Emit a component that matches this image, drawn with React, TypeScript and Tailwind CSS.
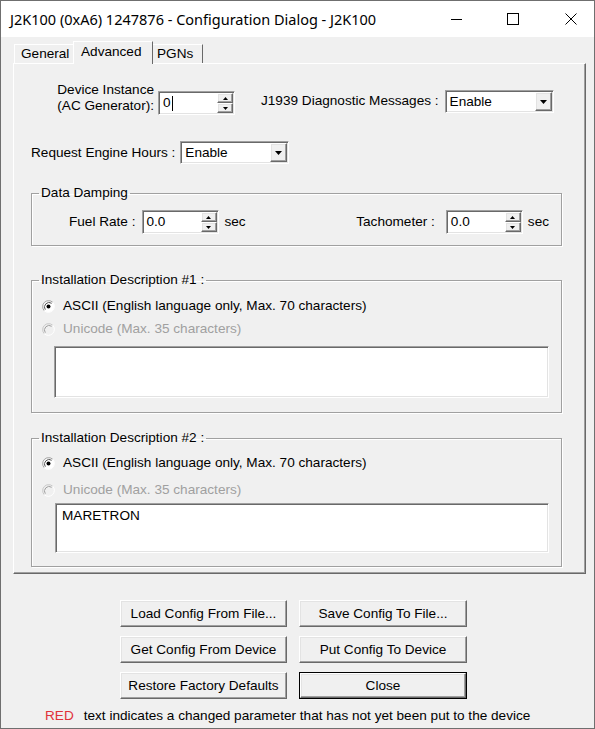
import React from "react";

const sunken =
  "border border-t-[#a0a0a0] border-l-[#a0a0a0] border-r-white border-b-white shadow-[inset_1px_1px_0_#696969,inset_-1px_-1px_0_#e3e3e3]";
const raised =
  "border border-t-white border-l-white border-r-[#696969] border-b-[#696969] shadow-[inset_-1px_-1px_0_#a0a0a0,inset_1px_1px_0_#e3e3e3]";
const groupBox =
  "border border-[#a0a0a0] shadow-[1px_1px_0_#fff,inset_1px_1px_0_#fff]";

function Arrow({ up }: { up?: boolean }) {
  return (
    <svg width="5" height="3" viewBox="0 0 5 3">
      <path d={up ? "M2.5 0L5 3H0Z" : "M0 0H5L2.5 3Z"} fill="#000" />
    </svg>
  );
}

function SpinBox({ value, caret }: { value: string; caret?: boolean }) {
  return (
    <div className={`flex h-[24px] w-[77px] bg-white ${sunken}`}>
      <div className="flex flex-1 items-center pl-[4px]">
        <span>{value}</span>
        {caret && <span className="ml-[1px] h-[15px] w-px bg-black" />}
      </div>
      <div className="flex w-[17px] flex-col py-[1px] pr-[1px]">
        <div className={`flex flex-1 items-center justify-center bg-[#f0f0f0] ${raised}`}>
          <Arrow up />
        </div>
        <div className={`flex flex-1 items-center justify-center bg-[#f0f0f0] ${raised}`}>
          <Arrow />
        </div>
      </div>
    </div>
  );
}

function Combo({ value }: { value: string }) {
  return (
    <div className={`flex h-[23px] w-[109px] bg-white ${sunken}`}>
      <div className="flex flex-1 items-center pl-[4px]">{value}</div>
      <div className="p-[1px]">
        <div className={`flex h-full w-[17px] items-center justify-center bg-[#f0f0f0] ${raised}`}>
          <svg width="7" height="4" viewBox="0 0 7 4">
            <path d="M0 0H7L3.5 4Z" fill="#000" />
          </svg>
        </div>
      </div>
    </div>
  );
}

function Radio({ checked, disabled }: { checked?: boolean; disabled?: boolean }) {
  return (
    <svg width="13" height="13" viewBox="0 0 13 13" className="shrink-0">
      <circle cx="6.5" cy="6.5" r="5.5" fill={disabled ? "#f0f0f0" : "#fff"} />
      <path d="M2.26 10.74A6 6 0 0 1 10.74 2.26" fill="none" stroke={disabled ? "#c8c8c8" : "#a0a0a0"} strokeWidth="1" />
      <path d="M3.3 9.7A4.6 4.6 0 0 1 9.7 3.3" fill="none" stroke={disabled ? "#a0a0a0" : "#555"} strokeWidth="1" />
      <path d="M10.74 2.26A6 6 0 0 1 2.26 10.74" fill="none" stroke="#fff" strokeWidth="1" />
      {checked && <circle cx="6.5" cy="6.5" r="2" fill="#000" />}
    </svg>
  );
}

function RadioRow({
  label,
  checked,
  disabled,
  className,
}: {
  label: string;
  checked?: boolean;
  disabled?: boolean;
  className?: string;
}) {
  return (
    <div className={`flex h-[16px] items-center gap-[8px] ${className ?? ""}`}>
      <Radio checked={checked} disabled={disabled} />
      <span className={disabled ? "text-[#a0a0a0]" : ""}>{label}</span>
    </div>
  );
}

function Button({ label, isDefault }: { label: string; isDefault?: boolean }) {
  return (
    <div className={isDefault ? "border border-black" : ""}>
      <div
        className={`flex items-center justify-center bg-[#f0f0f0] ${raised} ${
          isDefault ? "h-[25px]" : "h-[27px]"
        }`}
      >
        {label}
      </div>
    </div>
  );
}

function InstallDesc({
  n,
  text,
  gaps,
}: {
  n: number;
  text?: string;
  gaps: { a: string; b: string; c: string; h: string; pb: string; ml: string };
}) {
  return (
    <fieldset className={`w-[531px] ${groupBox} ${gaps.pb}`}>
      <legend className="ml-[7px] px-[2px]">Installation Description #{n} :</legend>
      <div className="pl-[10px]">
        <RadioRow label="ASCII (English language only, Max. 70 characters)" checked className={gaps.a} />
        <RadioRow label="Unicode (Max. 35 characters)" disabled className={gaps.b} />
      </div>
      <div className={`${gaps.c} ${gaps.ml} mr-[12px] ${gaps.h} bg-white pl-[6px] pt-[4px] ${sunken}`}>
        {text}
      </div>
    </fieldset>
  );
}

export default function App() {
  return (
    <div className="flex h-[729px] w-[595px] flex-col border border-[#6f6f6f] bg-[#f0f0f0] font-['Liberation_Sans',Arial,sans-serif] text-[13.6px] leading-[16px] text-black">
      {/* Title bar */}
      <div className="flex h-[36px] items-center bg-white pl-[9px] font-['Noto_Sans',sans-serif] text-[14.5px]">
        <span className="flex-1">J2K100 (0xA6) 1247876 - Configuration Dialog - J2K100</span>
        <div className="flex items-center">
          <div className="flex h-[36px] w-[46px] items-center justify-center">
            <svg width="11" height="11" viewBox="0 0 11 11">
              <path d="M0 5.5H11" stroke="#000" strokeWidth="1" />
            </svg>
          </div>
          <div className="ml-[11px] flex h-[36px] w-[46px] items-center justify-center">
            <svg width="12" height="12" viewBox="0 0 12 12">
              <rect x="0.5" y="0.5" width="11" height="11" fill="none" stroke="#000" strokeWidth="1" />
            </svg>
          </div>
          <div className="ml-[12px] flex h-[36px] w-[46px] items-center justify-center">
            <svg width="12" height="12" viewBox="0 0 12 12">
              <path d="M0.5 0.5L11.5 11.5M11.5 0.5L0.5 11.5" stroke="#000" strokeWidth="1" />
            </svg>
          </div>
        </div>
      </div>

      {/* Tabs */}
      <div className="flex h-[26px] items-end pl-[13px] pt-[4px]">
        <div className="h-[19px] w-[61px] border border-b-0 border-t-white border-l-white border-r-[#a0a0a0] pl-[6px] pt-[1px]">
          General
        </div>
        <div className="relative z-10 -mx-[2px] -mb-px h-[23px] w-[80px] border border-b-0 border-t-white border-l-white border-r-[#696969] bg-[#f0f0f0] pl-[7px] pt-[2px]">
          Advanced
        </div>
        <div className="h-[19px] w-[52px] border border-b-0 border-t-white border-l-white border-r-[#696969] pl-[5px] pt-[1px]">
          PGNs
        </div>
      </div>

      {/* Panel */}
      <div className="ml-[12px] h-[511px] w-[573px] border border-t-white border-l-white border-r-[#696969] border-b-[#696969] pl-[17px] pt-[18px] shadow-[inset_-1px_-1px_0_#a0a0a0]">
        {/* Row 1 */}
        <div className="flex items-start">
          <div className="ml-[22px] w-[101px] text-right">
            <div>Device Instance</div>
            <div>(AC Generator):</div>
          </div>
          <div className="ml-[4px] mt-[9px]">
            <SpinBox value="0" caret />
          </div>
          <div className="ml-[26px] mt-[11px]">J1939 Diagnostic Messages :</div>
          <div className="ml-[6px] mt-[8px]">
            <Combo value="Enable" />
          </div>
        </div>

        {/* Row 2 */}
        <div className="mt-[26px] flex items-center">
          <span>Request Engine Hours :</span>
          <div className="ml-[5px]">
            <Combo value="Enable" />
          </div>
        </div>

        {/* Data Damping */}
        <fieldset className={`mt-[21px] w-[531px] pb-[11px] ${groupBox}`}>
          <legend className="ml-[7px] px-[2px]">Data Damping</legend>
          <div className="mt-[9px] flex items-center pl-[37px] pr-[12px]">
            <span>Fuel Rate :</span>
            <div className="ml-[6px]">
              <SpinBox value="0.0" />
            </div>
            <span className="ml-[6px]">sec</span>
            <span className="ml-auto">Tachometer :</span>
            <div className="ml-[11px]">
              <SpinBox value="0.0" />
            </div>
            <span className="ml-[5px]">sec</span>
          </div>
        </fieldset>

        <div className="mt-[26px]">
          <InstallDesc
            n={1}
            gaps={{ a: "mt-[10px]", b: "mt-[7px]", c: "mt-[9px]", h: "h-[52px]", pb: "pb-[14px]", ml: "ml-[22px]" }}
          />
        </div>
        <div className="mt-[17px]">
          <InstallDesc
            n={2}
            text="MARETRON"
            gaps={{ a: "mt-[9px]", b: "mt-[11px]", c: "mt-[5px]", h: "h-[50px]", pb: "pb-[13px]", ml: "ml-[23px]" }}
          />
        </div>
      </div>

      {/* Buttons */}
      <div className="ml-[119px] mt-[26px] grid w-[347px] grid-cols-[167px_168px] gap-x-[12px] gap-y-[9px]">
        <Button label="Load Config From File..." />
        <Button label="Save Config To File..." />
        <Button label="Get Config From Device" />
        <Button label="Put Config To Device" />
        <Button label="Restore Factory Defaults" />
        <Button label="Close" isDefault />
      </div>

      {/* Footer */}
      <div className="mt-[9px] flex pl-[44px]">
        <span className="text-[#e0313a]">RED</span>
        <span className="ml-[10px]">text indicates a changed parameter that has not yet been put to the device</span>
      </div>
    </div>
  );
}
